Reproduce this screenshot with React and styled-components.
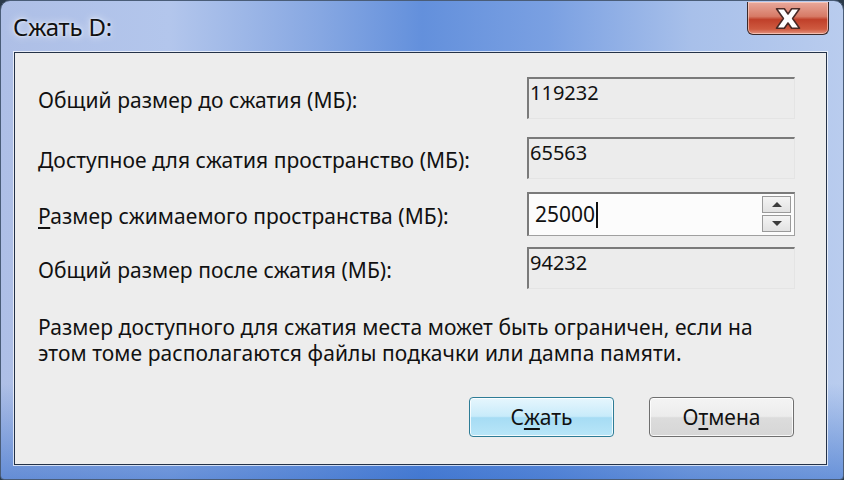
import React from "react";
import styled, { createGlobalStyle } from "styled-components";

const Global = createGlobalStyle`
  html, body { margin: 0; padding: 0; background: #2b3a4a; }
  body { font-family: "Noto Sans", "DejaVu Sans", sans-serif; }
`;

const Window = styled.div`
  width: 844px;
  height: 480px;
  box-sizing: border-box;
  display: flex;
  flex-direction: column;
  border-radius: 10px 10px 4px 4px;
  border: 1px solid #4a5d78;
  background:
    linear-gradient(to bottom, rgba(255,255,255,0) 0%, rgba(255,255,255,0) 80%, rgba(40,100,200,0.55) 100%),
    linear-gradient(to right, #aebfe6 0%, #b3c6ec 20%, #86a7e2 38%, #6390dc 50%, #7aa0e2 65%, #a8c0ea 82%, #b9ccee 100%);
  padding: 0 16px 14px 13px;
  overflow: hidden;
`;

const TitleBar = styled.div`
  height: 51px;
  display: flex;
  align-items: flex-start;
  justify-content: space-between;
`;

const Title = styled.div`
  margin-top: 9px;
  margin-left: -1px;
  font-family: "Noto Sans", sans-serif;
  font-size: 24px;
  letter-spacing: -0.2px;
  color: #111;
  text-shadow: 0 0 8px rgba(255,255,255,0.9), 0 0 3px rgba(255,255,255,0.8);
`;

const CloseButton = styled.div`
  width: 82px;
  height: 33px;
  margin-top: 1px;
  margin-right: -2px;
  box-sizing: border-box;
  border: 1px solid #3b2a2a;
  border-top: none;
  border-radius: 0 0 6px 6px;
  background: linear-gradient(to bottom, #e8a99c 0%, #d77a66 45%, #c0402a 55%, #cf5a40 85%, #e49582 100%);
  box-shadow: inset 0 0 0 1px rgba(255,220,210,0.6);
  display: flex;
  align-items: center;
  justify-content: center;
`;

const Client = styled.div`
  flex: 1;
  box-sizing: border-box;
  background: #ededed;
  border: 1px solid #243248;
  box-shadow: 0 0 0 1px rgba(255,255,255,0.7);
  padding: 24px 31px 0 23px;
  display: flex;
  flex-direction: column;
  font-family: "Noto Sans", sans-serif;
  font-size: 21px;
  color: #111;
`;

const Row = styled.div`
  display: flex;
  align-items: center;
  justify-content: space-between;
  margin-top: ${(p) => p.$mt || 0}px;
`;

const Label = styled.div`
  letter-spacing: 0.05px;
  margin-top: 4px;
`;

const Field = styled.div`
  width: 268px;
  height: ${(p) => (p.$edit ? 44 : 42)}px;
  box-sizing: border-box;
  background: ${(p) => (p.$edit ? "#fcfcfc" : "#ececec")};
  border-top: 2px solid #7a7a7a;
  border-left: 2px solid #7a7a7a;
  border-right: 1px solid ${(p) => (p.$edit ? "#a0a0a0" : "#e4e4e4")};
  border-bottom: 1px solid ${(p) => (p.$edit ? "#a0a0a0" : "#e4e4e4")};
  display: flex;
  align-items: flex-start;
  padding: ${(p) => (p.$edit ? "6px 3px 0 6px" : "0 0 0 1px")};
  font-size: ${(p) => (p.$edit ? 21 : 20)}px;
  line-height: 28px;
  position: relative;
`;

const Caret = styled.span`
  display: inline-block;
  width: 2px;
  height: 26px;
  background: #111;
  margin-left: 1px;
  margin-top: 2px;
`;

const Spinner = styled.div`
  position: absolute;
  right: 3px;
  top: 2px;
  display: flex;
  flex-direction: column;
  gap: 2px;
`;

const SpinButton = styled.div`
  width: 29px;
  height: 17px;
  box-sizing: border-box;
  border: 1px solid #9a9a9a;
  background: linear-gradient(#f4f4f4, #e2e2e2);
  display: flex;
  align-items: center;
  justify-content: center;
`;

const Note = styled.div`
  margin-top: 25px;
  line-height: 26px;
  letter-spacing: 0.08px;
`;

const Buttons = styled.div`
  margin-top: 31px;
  display: flex;
  justify-content: flex-end;
  gap: 35px;
  margin-right: 1px;
`;

const Button = styled.div`
  width: 145px;
  height: 40px;
  box-sizing: border-box;
  border-radius: 4px;
  border: 1px solid ${(p) => (p.$def ? "#2d7c96" : "#6f6f6f")};
  background: ${(p) =>
    p.$def
      ? "linear-gradient(to bottom, #e6f6fd 0%, #c8ebfa 48%, #a6dcf4 52%, #b9e6f8 100%)"
      : "linear-gradient(to bottom, #f4f4f4 0%, #ececec 48%, #dcdcdc 52%, #d6d6d6 100%)"};
  box-shadow: inset 0 0 0 1px rgba(255,255,255,0.8);
  display: flex;
  align-items: center;
  justify-content: center;
  font-size: 21px;
  color: #111;
`;

const U = styled.span`
  text-decoration: underline;
  text-underline-offset: 3px;
`;

export default function App() {
  return (
    <>
      <Global />
      <Window>
        <TitleBar>
          <Title>Сжать D:</Title>
          <CloseButton>
            <svg width="34" height="27" viewBox="0 0 28 22">
              <path d="M4.5 3 L11 3 L14 7.3 L17 3 L23.5 3 L17.8 11 L23.5 19 L17 19 L14 14.7 L11 19 L4.5 19 L10.2 11 Z"
                fill="#fff" stroke="#4a2a26" strokeWidth="1.3" strokeLinejoin="round" />
            </svg>
          </CloseButton>
        </TitleBar>
        <Client>
          <Row>
            <Label>Общий размер до сжатия (МБ):</Label>
            <Field>119232</Field>
          </Row>
          <Row $mt={18}>
            <Label>Доступное для сжатия пространство (МБ):</Label>
            <Field>65563</Field>
          </Row>
          <Row $mt={13}>
            <Label><U>Р</U>азмер сжимаемого пространства (МБ):</Label>
            <Field $edit>
              25000<Caret />
              <Spinner>
                <SpinButton>
                  <svg width="12" height="7" viewBox="0 0 12 7"><path d="M1 6 L6 1 L11 6 Z" fill="#3c3c3c" /></svg>
                </SpinButton>
                <SpinButton>
                  <svg width="12" height="7" viewBox="0 0 12 7"><path d="M1 1 L6 6 L11 1 Z" fill="#3c3c3c" /></svg>
                </SpinButton>
              </Spinner>
            </Field>
          </Row>
          <Row $mt={11}>
            <Label>Общий размер после сжатия (МБ):</Label>
            <Field>94232</Field>
          </Row>
          <Note>
            Размер доступного для сжатия места может быть ограничен, если на<br />
            этом томе располагаются файлы подкачки или дампа памяти.
          </Note>
          <Buttons>
            <Button $def>С<U>ж</U>ать</Button>
            <Button>О<U>т</U>мена</Button>
          </Buttons>
        </Client>
      </Window>
    </>
  );
}
